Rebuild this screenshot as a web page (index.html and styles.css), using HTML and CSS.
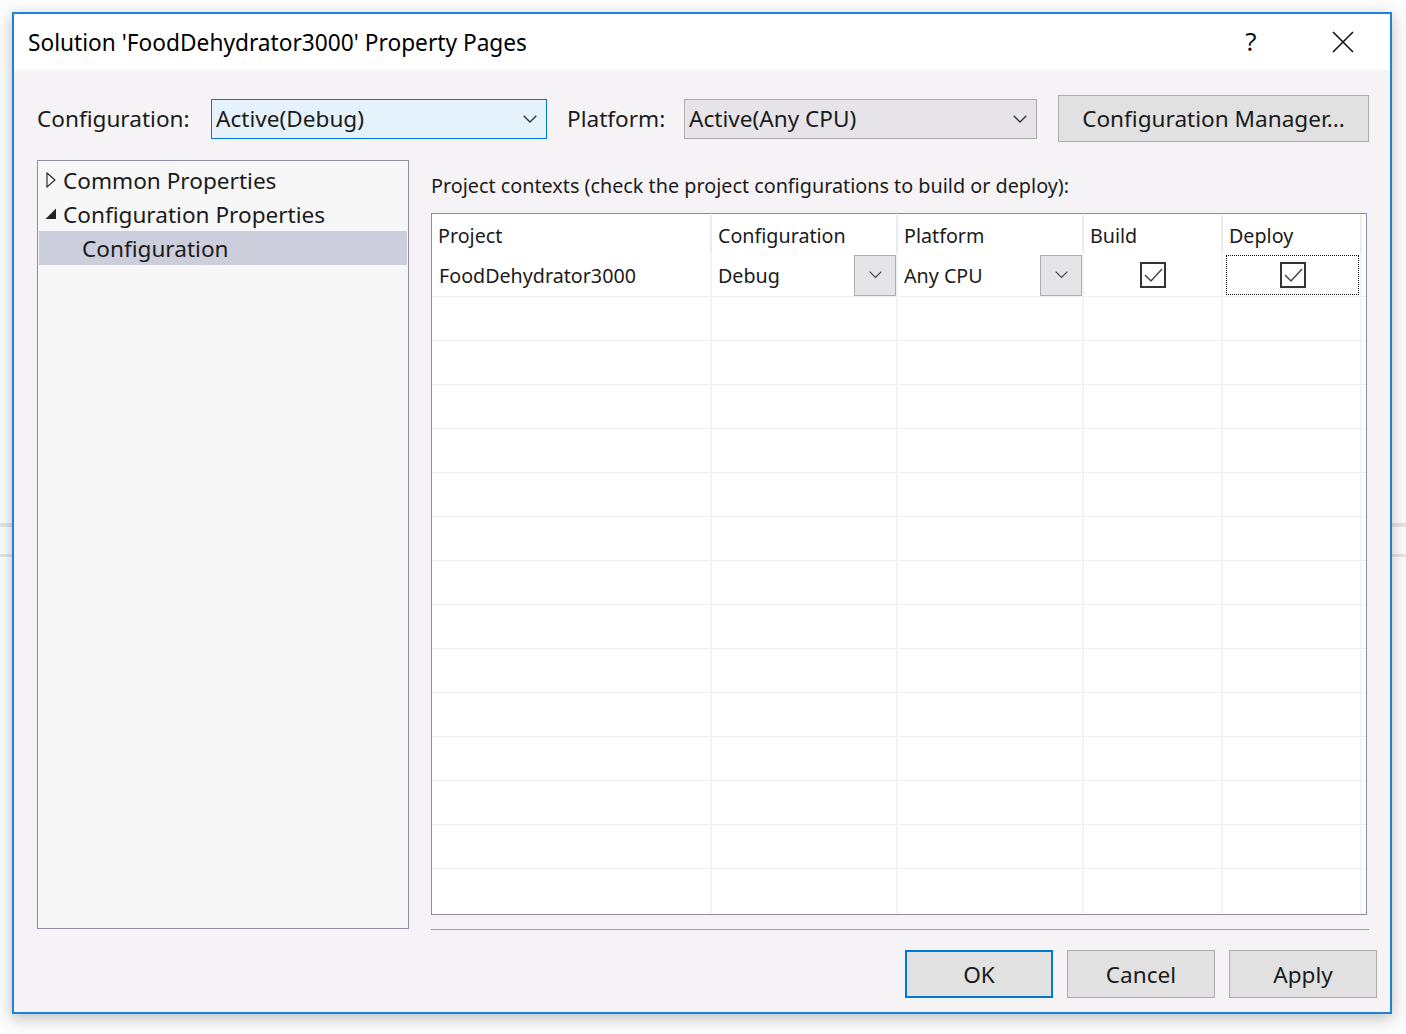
FILE: index.html
```
<!DOCTYPE html>
<html>
<head>
<meta charset="utf-8">
<title>Property Pages</title>
<link rel="stylesheet" href="styles.css">
</head>
<body>
<div class="window">
  <div class="titlebar">
    <div class="title">Solution 'FoodDehydrator3000' Property Pages</div>
    <div class="tb-btn tb-help">?</div>
    <div class="tb-btn tb-close">
      <svg width="22" height="22" viewBox="0 0 22 22"><path d="M1 1 L21 21 M21 1 L1 21" stroke="#111" stroke-width="1.6" fill="none"/></svg>
    </div>
  </div>
  <div class="content">
    <div class="config-row">
      <div class="lbl lbl-config">Configuration:</div>
      <div class="combo combo-active">
        <span class="combo-text">Active(Debug)</span>
        <svg class="chev" width="14" height="8" viewBox="0 0 14 8"><polyline points="0.7,0.7 7,7 13.3,0.7" fill="none" stroke="#333" stroke-width="1.3"/></svg>
      </div>
      <div class="lbl lbl-platform">Platform:</div>
      <div class="combo combo-plat">
        <span class="combo-text">Active(Any CPU)</span>
        <svg class="chev" width="14" height="8" viewBox="0 0 14 8"><polyline points="0.7,0.7 7,7 13.3,0.7" fill="none" stroke="#333" stroke-width="1.3"/></svg>
      </div>
      <button class="btn btn-mgr">Configuration Manager...</button>
    </div>

    <div class="main">
      <div class="tree">
        <div class="tree-row">
          <span class="tree-arrow"><svg width="10" height="16" viewBox="0 0 10 16"><polygon points="1,1 9,8 1,15" fill="none" stroke="#222" stroke-width="1.1"/></svg></span>
          <span>Common Properties</span>
        </div>
        <div class="tree-row">
          <span class="tree-arrow"><svg width="12" height="12" viewBox="0 0 12 12"><polygon points="11,0.5 11,11 0.5,11" fill="#222"/></svg></span>
          <span>Configuration Properties</span>
        </div>
        <div class="tree-row tree-child selected">
          <span>Configuration</span>
        </div>
      </div>

      <div class="right">
        <div class="ctx-label">Project contexts (check the project configurations to build or deploy):</div>
        <div class="grid">
          <div class="grow ghead">
            <div class="gcell">Project</div>
            <div class="gcell">Configuration</div>
            <div class="gcell">Platform</div>
            <div class="gcell">Build</div>
            <div class="gcell">Deploy</div>
            <div class="gcell gend"></div>
          </div>
          <div class="grow gdata">
            <div class="gcell">FoodDehydrator3000</div>
            <div class="gcell">
              <span>Debug</span>
              <span class="cell-dd"><svg width="13" height="8" viewBox="0 0 13 8"><polyline points="0.7,0.7 6.5,6.5 12.3,0.7" fill="none" stroke="#444" stroke-width="1.2"/></svg></span>
            </div>
            <div class="gcell">
              <span>Any CPU</span>
              <span class="cell-dd"><svg width="13" height="8" viewBox="0 0 13 8"><polyline points="0.7,0.7 6.5,6.5 12.3,0.7" fill="none" stroke="#444" stroke-width="1.2"/></svg></span>
            </div>
            <div class="gcell gcenter">
              <span class="chk"><svg width="22" height="22" viewBox="0 0 22 22"><polyline points="3,11 9,17 20,5" fill="none" stroke="#444" stroke-width="1.5"/></svg></span>
            </div>
            <div class="gcell gfocus-cell">
              <div class="focus">
                <span class="chk"><svg width="22" height="22" viewBox="0 0 22 22"><polyline points="3,11 9,17 20,5" fill="none" stroke="#444" stroke-width="1.5"/></svg></span>
              </div>
            </div>
            <div class="gcell gend"></div>
          </div>
          <div class="grow gempty"><div class="gcell"></div><div class="gcell"></div><div class="gcell"></div><div class="gcell"></div><div class="gcell"></div><div class="gcell gend"></div></div>
          <div class="grow gempty"><div class="gcell"></div><div class="gcell"></div><div class="gcell"></div><div class="gcell"></div><div class="gcell"></div><div class="gcell gend"></div></div>
          <div class="grow gempty"><div class="gcell"></div><div class="gcell"></div><div class="gcell"></div><div class="gcell"></div><div class="gcell"></div><div class="gcell gend"></div></div>
          <div class="grow gempty"><div class="gcell"></div><div class="gcell"></div><div class="gcell"></div><div class="gcell"></div><div class="gcell"></div><div class="gcell gend"></div></div>
          <div class="grow gempty"><div class="gcell"></div><div class="gcell"></div><div class="gcell"></div><div class="gcell"></div><div class="gcell"></div><div class="gcell gend"></div></div>
          <div class="grow gempty"><div class="gcell"></div><div class="gcell"></div><div class="gcell"></div><div class="gcell"></div><div class="gcell"></div><div class="gcell gend"></div></div>
          <div class="grow gempty"><div class="gcell"></div><div class="gcell"></div><div class="gcell"></div><div class="gcell"></div><div class="gcell"></div><div class="gcell gend"></div></div>
          <div class="grow gempty"><div class="gcell"></div><div class="gcell"></div><div class="gcell"></div><div class="gcell"></div><div class="gcell"></div><div class="gcell gend"></div></div>
          <div class="grow gempty"><div class="gcell"></div><div class="gcell"></div><div class="gcell"></div><div class="gcell"></div><div class="gcell"></div><div class="gcell gend"></div></div>
          <div class="grow gempty"><div class="gcell"></div><div class="gcell"></div><div class="gcell"></div><div class="gcell"></div><div class="gcell"></div><div class="gcell gend"></div></div>
          <div class="grow gempty"><div class="gcell"></div><div class="gcell"></div><div class="gcell"></div><div class="gcell"></div><div class="gcell"></div><div class="gcell gend"></div></div>
          <div class="grow gempty"><div class="gcell"></div><div class="gcell"></div><div class="gcell"></div><div class="gcell"></div><div class="gcell"></div><div class="gcell gend"></div></div>
          <div class="grow gempty"><div class="gcell"></div><div class="gcell"></div><div class="gcell"></div><div class="gcell"></div><div class="gcell"></div><div class="gcell gend"></div></div>
          <div class="grow gfill"><div class="gcell"></div><div class="gcell"></div><div class="gcell"></div><div class="gcell"></div><div class="gcell"></div><div class="gcell gend"></div></div>
        </div>
        <div class="sep"></div>
      </div>
    </div>

    <div class="footer">
      <button class="btn btn-dlg btn-primary">OK</button>
      <button class="btn btn-dlg">Cancel</button>
      <button class="btn btn-dlg">Apply</button>
    </div>
  </div>
</div>
</body>
</html>
```

FILE: styles.css
```
html, body {
  margin: 0;
  padding: 0;
}

body {
  width: 1406px;
  height: 1034px;
  overflow: hidden;
  background:
    linear-gradient(to bottom,
      transparent 523px, #e3e3e3 523px, #e3e3e3 527px, transparent 527px,
      transparent 554px, #e3e3e3 554px, #e3e3e3 557px, transparent 557px),
    #fcfcfc;
  font-family: "Noto Sans", "Open Sans", sans-serif;
  color: #1b1b1b;
}

.window {
  margin: 12px 0 0 12px;
  width: 1380px;
  height: 1002px;
  box-sizing: border-box;
  border: 2px solid #1c83d6;
  background: #f6f3f6;
  box-shadow: 0 4px 14px rgba(0, 0, 0, 0.25);
  display: flex;
  flex-direction: column;
}

/* Title bar */
.titlebar {
  height: 56px;
  flex: none;
  background: #ffffff;
  display: flex;
  align-items: center;
  padding-right: 1px;
}

.title {
  flex: 1;
  padding-left: 14px;
  font-size: 22.7px;
  color: #000;
  white-space: nowrap;
}

.tb-btn {
  width: 92px;
  height: 56px;
  display: flex;
  align-items: center;
  justify-content: center;
}

.tb-help {
  font-size: 26px;
  font-weight: 400;
  color: #111;
  padding-bottom: 2px;
  box-sizing: border-box;
}

/* Content */
.content {
  flex: 1;
  padding: 25px 13px 0 23px;
  display: flex;
  flex-direction: column;
}

.config-row {
  display: flex;
  align-items: center;
  height: 47px;
}

.lbl {
  font-size: 22.6px;
  white-space: nowrap;
}

.lbl-config {
  width: 174px;
}

.lbl-platform {
  width: 117px;
  margin-left: 20px;
}

.combo {
  box-sizing: border-box;
  height: 40px;
  display: flex;
  align-items: center;
  padding: 0 9px 0 4px;
  font-size: 22.6px;
}

.combo-text {
  flex: 1;
  white-space: nowrap;
}

.combo-active {
  width: 336px;
  border: 1px solid #0078d7;
  background: #e5f1fb;
}

.combo-plat {
  width: 353px;
  border: 1px solid #adadad;
  background: #e6e4e8;
}

.btn {
  box-sizing: border-box;
  border: 1px solid #adadad;
  background: #e1e1e1;
  font-family: "Noto Sans", "Open Sans", sans-serif;
  font-size: 22.6px;
  color: #1b1b1b;
  padding: 0;
}

.btn-mgr {
  width: 311px;
  height: 47px;
  margin-left: 21px;
}

/* Main area */
.main {
  display: flex;
  margin-top: 18px;
}

.tree {
  width: 372px;
  height: 769px;
  box-sizing: border-box;
  border: 1px solid #8f8da0;
  background: #f7f7f7;
  padding: 2px 1px 0 1px;
}

.tree-row {
  height: 34px;
  display: flex;
  align-items: center;
  font-size: 22.6px;
  white-space: nowrap;
}

.tree-arrow {
  width: 24px;
  display: flex;
  justify-content: center;
  align-items: center;
}

.tree-child {
  padding-left: 43px;
}

.selected {
  background: #cccedb;
}

.right {
  margin-left: 22px;
  width: 938px;
}

.ctx-label {
  height: 53px;
  display: flex;
  align-items: center;
  padding-bottom: 3px;
  box-sizing: border-box;
  font-size: 19.8px;
  white-space: nowrap;
}

.grid {
  width: 936px;
  height: 702px;
  box-sizing: border-box;
  border: 1px solid #8f8da0;
  background: #ffffff;
  display: flex;
  flex-direction: column;
  font-size: 19.7px;
}

.grow {
  display: grid;
  grid-template-columns: 280px 186px 186px 139px 139px 1fr;
}

.gcell {
  box-sizing: border-box;
  border-right: 2px solid #eff3fa;
  display: flex;
  align-items: center;
  padding-left: 6px;
  white-space: nowrap;
  min-width: 0;
}

.gend {
  border-right: none;
}

.ghead {
  height: 40px;
}

.ghead .gcell {
  border-right: 2px solid #ebebee;
  margin: 1px 0 1px 0;
  padding-top: 2px;
}

.ghead .gend {
  border-right: none;
}

.gdata {
  height: 43px;
  border-bottom: 1px solid #f0eef2;
  box-sizing: border-box;
}

.gdata .gcell:first-child {
  padding-left: 7px;
}

.gempty {
  height: 44px;
  box-sizing: border-box;
  border-bottom: 1px solid #f0eef2;
}

.gfill {
  flex: 1;
}

.cell-dd {
  margin-left: auto;
  width: 42px;
  height: 41px;
  box-sizing: border-box;
  border: 1px solid #adadad;
  background: #e5e4e7;
  display: flex;
  align-items: center;
  justify-content: center;
}

.gcenter {
  justify-content: center;
  padding-left: 0;
}

.gfocus-cell {
  padding: 0 1px 0 3px;
}

.focus {
  flex: 1;
  height: 40px;
  box-sizing: border-box;
  border: 1px dotted #111;
  display: flex;
  align-items: center;
  justify-content: center;
}

.chk {
  width: 26px;
  height: 26px;
  box-sizing: border-box;
  border: 2px solid #333;
  background: #fff;
  display: flex;
  align-items: center;
  justify-content: center;
}

.sep {
  margin-top: 14px;
  height: 1px;
  background: #a3a1ab;
}

/* Footer */
.footer {
  display: flex;
  justify-content: flex-end;
  gap: 14px;
  margin-top: 20px;
}

.btn-dlg {
  width: 148px;
  height: 48px;
}

.btn-primary {
  border: 2px solid #0078d7;
}
```
